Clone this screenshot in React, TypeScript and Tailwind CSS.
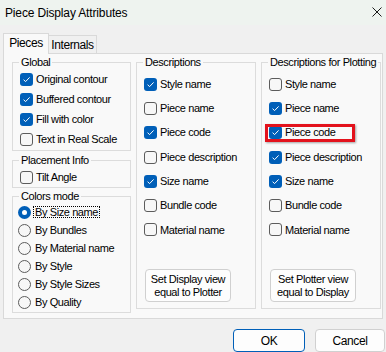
import type { ReactNode } from 'react'

function Check({ checked }: { checked?: boolean }) {
  if (checked) {
    return (
      <span className="flex h-[13px] w-[13px] shrink-0 items-center justify-center rounded-[3px] bg-[#005fb8]">
        <svg width="9" height="9" viewBox="0 0 9 9">
          <path d="M1.6 4.7 L3.6 6.6 L7.6 2.4" fill="none" stroke="#ffffff" strokeWidth="1" />
        </svg>
      </span>
    )
  }
  return <span className="h-[13px] w-[13px] shrink-0 rounded-[3px] border border-[#5c5c5c] bg-[#f7f7f7]" />
}

function Radio({ checked }: { checked?: boolean }) {
  if (checked) {
    return (
      <span className="flex h-[13px] w-[13px] shrink-0 items-center justify-center rounded-full bg-[#005fb8]">
        <span className="h-[5px] w-[5px] rounded-full bg-white" />
      </span>
    )
  }
  return <span className="h-[13px] w-[13px] shrink-0 rounded-full border border-[#5c5c5c] bg-[#f7f7f7]" />
}

function Group({ title, className, children }: { title: string; className?: string; children: ReactNode }) {
  return (
    <fieldset className={`min-w-0 border border-[#dcdcdc] ${className ?? ''}`}>
      <legend className="ml-[6px] whitespace-nowrap px-[2px] leading-[14px]">{title}</legend>
      {children}
    </fieldset>
  )
}

function CheckRow({ label, checked, tall }: { label: string; checked?: boolean; tall?: boolean }) {
  return (
    <div className={`flex items-center gap-[3px] pl-[7px] ${tall ? 'h-[24.3px]' : 'h-[20px]'}`}>
      <Check checked={checked} />
      <span className="whitespace-nowrap">{label}</span>
    </div>
  )
}

function RadioRow({ label, checked }: { label: string; checked?: boolean }) {
  return (
    <div className="flex h-[18px] items-center gap-[2px] pl-[5px]">
      <Radio checked={checked} />
      {checked ? (
        <span className="border border-dotted border-black px-[1px] leading-[10px]">{label}</span>
      ) : (
        <span className="px-[2px]">{label}</span>
      )}
    </div>
  )
}

const descriptions = [
  { label: 'Style name', checked: true },
  { label: 'Piece name', checked: false },
  { label: 'Piece code', checked: true },
  { label: 'Piece description', checked: false },
  { label: 'Size name', checked: true },
  { label: 'Bundle code', checked: false },
  { label: 'Material name', checked: false },
]

const plotting = [
  { label: 'Style name', checked: false },
  { label: 'Piece name', checked: true },
  { label: 'Piece code', checked: true },
  { label: 'Piece description', checked: true },
  { label: 'Size name', checked: true },
  { label: 'Bundle code', checked: false },
  { label: 'Material name', checked: false },
]

const colorModes = ['By Size name', 'By Bundles', 'By Material name', 'By Style', 'By Style Sizes', 'By Quality']

function SmallButton({ lines }: { lines: [string, string] }) {
  return (
    <button className="ml-[8px] mt-[27px] flex h-[33px] w-[86px] flex-col items-center justify-center rounded-[4px] border border-[#d0d0d0] bg-[#fdfdfd] leading-[13px]">
      <span>{lines[0]}</span>
      <span>{lines[1]}</span>
    </button>
  )
}

export default function App() {
  return (
    <div className="flex h-[352px] w-[386px] flex-col overflow-hidden bg-[#f0f0f0] font-['Liberation_Sans',Arial,sans-serif] text-[11px] tracking-[-0.4px] text-black">
      {/* title bar */}
      <div className="flex h-[25px] shrink-0 items-center justify-between bg-[#eef3ef] pl-[5px] pr-[4px]">
        <span className="text-[12px] tracking-[-0.15px]">Piece Display Attributes</span>
        <svg width="10" height="10" viewBox="0 0 10 10" className="mb-[2px]">
          <path d="M0.5 0.5 L9.5 9.5 M9.5 0.5 L0.5 9.5" stroke="#1a1a1a" strokeWidth="1" />
        </svg>
      </div>

      {/* tabs */}
      <div className="ml-[3px] mt-[8px] flex h-[20px] items-end">
        <div className="relative z-10 -mb-px flex h-[21px] w-[46px] items-center justify-center border border-b-0 border-[#d9d9d9] bg-[#f9f9f9] pb-[2px] text-[12px]">
          Pieces
        </div>
        <div className="flex h-[18px] w-[48px] items-center justify-center border border-b-0 border-l-0 border-[#d9d9d9] bg-[#f0f0f0] text-[12px]">
          Internals
        </div>
      </div>

      {/* panel */}
      <div className="mx-[3px] flex h-[270px] gap-[5px] border border-[#d9d9d9] bg-[#f9f9f9] pl-[8px] pt-[1px]">
        <div className="flex w-[119px] flex-col">
          <Group title="Global" className="pb-[1px]">
            <CheckRow label="Original contour" checked />
            <CheckRow label="Buffered contour" checked />
            <CheckRow label="Fill with color" checked />
            <CheckRow label="Text in Real Scale" />
          </Group>
          <Group title="Placement Info" className="mt-[2px]">
            <CheckRow label="Tilt Angle" />
          </Group>
          <Group title="Colors mode" className="mt-[1px] pb-[1px]">
            {colorModes.map((m, i) => (
              <RadioRow key={m} label={m} checked={i === 0} />
            ))}
          </Group>
        </div>

        <Group title="Descriptions" className="mb-[9px] flex w-[120px] flex-col pt-[3px]">
          {descriptions.map((d) => (
            <CheckRow key={d.label} label={d.label} checked={d.checked} tall />
          ))}
          <SmallButton lines={['Set Display view', 'equal to Plotter']} />
        </Group>

        <Group title="Descriptions for Plotting" className="mb-[9px] flex w-[120px] flex-col pt-[3px]">
          {plotting.map((d) => (
            <div key={d.label} className="relative">
              <CheckRow label={d.label} checked={d.checked} tall />
              {d.label === 'Piece code' && (
                <span className="absolute left-[3px] top-[3px] h-[18px] w-[90px] border-[3px] border-[#e3121c] shadow-[1px_1px_2px_rgba(0,0,0,0.35)]" />
              )}
            </div>
          ))}
          <SmallButton lines={['Set Plotter view', 'equal to Display']} />
        </Group>
      </div>

      {/* dialog buttons */}
      <div className="mt-[10px] flex gap-[10px] pl-[233px]">
        <button className="h-[23px] w-[72px] shrink-0 rounded-[4px] border border-[#005fb8] bg-[#fdfdfd] text-[12px]">OK</button>
        <button className="h-[23px] w-[70px] shrink-0 rounded-[4px] border border-[#d0d0d0] bg-[#fdfdfd] text-[12px]">Cancel</button>
      </div>
    </div>
  )
}
